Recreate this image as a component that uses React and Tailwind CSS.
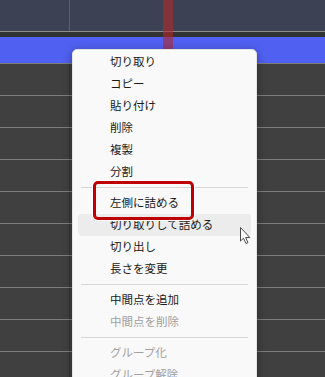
import React from "react";

const items = [
  { t: "切り取り" },
  { t: "コピー" },
  { t: "貼り付け" },
  { t: "削除" },
  { t: "複製" },
  { t: "分割" },
  { sep: true },
  { t: "左側に詰める" },
  { t: "切り取りして詰める", hover: true },
  { t: "切り出し" },
  { t: "長さを変更" },
  { sep: true },
  { t: "中間点を追加" },
  { t: "中間点を削除", disabled: true },
  { sep: true },
  { t: "グループ化", disabled: true },
  { t: "グループ解除", disabled: true },
];

function Row() {
  return (
    <div className="flex h-[32px] border-t border-[#7c7c7c] bg-[#404040]">
      <div className="w-[70px] h-full border-r border-[#353535]" />
      <div className="flex-1" />
    </div>
  );
}

export default function App() {
  return (
    <div
      className="relative w-[325px] h-[377px] overflow-hidden bg-[#404040]"
      style={{ fontFamily: '"Noto Sans CJK JP", "Noto Sans", sans-serif' }}
    >
      {/* top area */}
      <div className="flex h-[31px] bg-[#3c4154]">
        <div className="w-[70px] h-full border-r border-[#5b5f6c]" />
        <div className="flex-1" />
      </div>
      <div className="h-[1px] bg-[#8c8c8c]" />
      <div className="h-[5px] bg-[#333333]" />
      <div className="h-[26px] bg-[#5060f0]" />
      {Array.from({ length: 10 }).map((_, i) => (
        <Row key={i} />
      ))}

      {/* playhead */}
      <div className="absolute left-[163px] top-0 w-[10px] h-[50px] bg-[rgba(180,40,40,0.6)]" />

      {/* context menu */}
      <div className="absolute left-[72px] top-[49px] w-[185px] h-[360px] rounded-[5px] bg-[#f9f9f9] border border-[#e4e4e4] shadow-[0_2px_8px_rgba(0,0,0,0.35)] pt-[1px] px-[5px]">
        {items.map((it, i) =>
          it.sep ? (
            <div key={i} className="h-[9px] flex items-center px-[3px]">
              <div className="h-[1px] w-full bg-[#d6d6d6]" />
            </div>
          ) : (
            <div
              key={i}
              className={
                "h-[22px] flex items-center pl-[32px] rounded-[4px] text-[11.5px] leading-none " +
                (it.hover ? "bg-[#ececec] " : "") +
                (it.disabled ? "text-[#a0a0a0]" : "text-[#1a1a1a]")
              }
            >
              {it.t}
            </div>
          )
        )}
      </div>

      {/* red highlight box */}
      <div className="absolute left-[93px] top-[181px] w-[101px] h-[39px] rounded-[5px] border-[3px] border-[#c00000] shadow-[0_0_0_1px_#ffffff]" />

      {/* mouse cursor */}
      <svg
        className="absolute left-[239px] top-[226px]"
        width="14"
        height="20"
        viewBox="0 0 14 20"
      >
        <path
          d="M1.5 1.5 L1.5 15 L4.5 12.2 L7 17.5 L9 16.6 L6.6 11.5 L10.8 11.5 Z"
          fill="#ffffff"
          stroke="#4a4a4a"
          strokeWidth="1"
          strokeLinejoin="miter"
        />
      </svg>
    </div>
  );
}
